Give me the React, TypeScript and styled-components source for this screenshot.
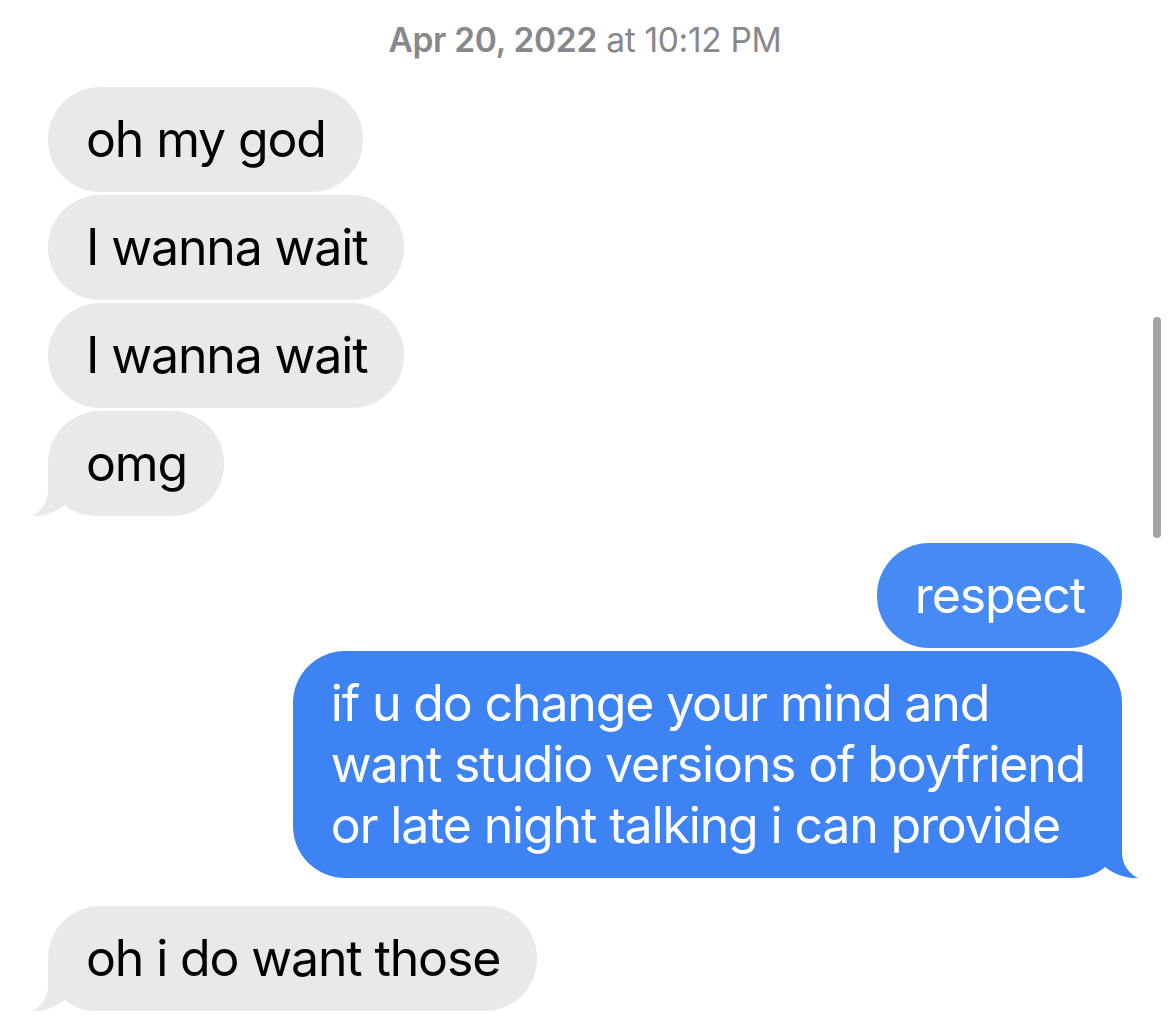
import React from "react";
import styled, { createGlobalStyle } from "styled-components";

const GRAY = "#e9e9eb";
const BLUE_TOP = "#468bf4";
const BLUE_LOW = "#3d83f4";

const GlobalStyle = createGlobalStyle`
  html, body {
    margin: 0;
    padding: 0;
    background: #ffffff;
  }
  body {
    font-family: Inter, "Noto Sans", "Liberation Sans", sans-serif;
    -webkit-font-smoothing: antialiased;
  }
`;

const Screen = styled.div`
  position: relative;
  width: 1170px;
  height: 1027px;
  overflow: hidden;
  background: #ffffff;
  box-sizing: border-box;
  padding: 20px 48px 0 48px;
  display: flex;
  flex-direction: column;
`;

const Timestamp = styled.div`
  text-align: center;
  font-size: 33.5px;
  line-height: 40px;
  color: #88888c;
  letter-spacing: -0.3px;
  margin-bottom: 27px;

  b {
    font-weight: 600;
  }
`;

const Group = styled.div<{ $side: "left" | "right"; $gapTop?: number }>`
  display: flex;
  flex-direction: column;
  align-items: ${(p) => (p.$side === "left" ? "flex-start" : "flex-end")};
  gap: 3px;
  margin-top: ${(p) => p.$gapTop ?? 0}px;
`;

const Bubble = styled.div<{ $mine?: boolean; $bg: string }>`
  position: relative;
  isolation: isolate;
  box-sizing: border-box;
  padding: 22px 37px 22px 38px;
  border-radius: 52px;
  font-size: 50px;
  line-height: 61px;
  letter-spacing: -1.15px;
  white-space: nowrap;
  background: ${(p) => p.$bg};
  color: ${(p) => (p.$mine ? "#ffffff" : "#000000")};
`;

const TailSvg = styled.svg<{ $mine?: boolean }>`
  position: absolute;
  z-index: -1;
  bottom: 0;
  width: 70px;
  height: 52px;
  ${(p) =>
    p.$mine
      ? "right: -16px; transform: scaleX(-1);"
      : "left: -16px;"}
`;

const Tail = ({ color, mine }: { color: string; mine?: boolean }) => (
  <TailSvg $mine={mine} viewBox="0 0 70 52" aria-hidden>
    <path
      d="M16 0 L16 26 C16 38 10 47 0 52 C10 53 23 49 33 41 C42 49 52 52 70 52 L70 0 Z"
      fill={color}
    />
  </TailSvg>
);

const ScrollThumb = styled.div`
  position: absolute;
  right: 9px;
  top: 317px;
  width: 8px;
  height: 221px;
  border-radius: 4px;
  background: #a4a4a6;
`;

export default function App() {
  return (
    <>
      <GlobalStyle />
      <Screen>
        <Timestamp>
          <b>Apr 20, 2022</b> at 10:12 PM
        </Timestamp>

        <Group $side="left">
          <Bubble $bg={GRAY}>oh my god</Bubble>
          <Bubble $bg={GRAY}>I wanna wait</Bubble>
          <Bubble $bg={GRAY}>I wanna wait</Bubble>
          <Bubble $bg={GRAY}>
            omg
            <Tail color={GRAY} />
          </Bubble>
        </Group>

        <Group $side="right" $gapTop={27}>
          <Bubble $mine $bg={BLUE_TOP}>respect</Bubble>
          <Bubble $mine $bg={BLUE_LOW}>
            if u do change your mind and
            <br />
            want studio versions of boyfriend
            <br />
            or late night talking i can provide
            <Tail color={BLUE_LOW} mine />
          </Bubble>
        </Group>

        <Group $side="left" $gapTop={28}>
          <Bubble $bg={GRAY}>
            oh i do want those
            <Tail color={GRAY} />
          </Bubble>
        </Group>

        <ScrollThumb />
      </Screen>
    </>
  );
}
